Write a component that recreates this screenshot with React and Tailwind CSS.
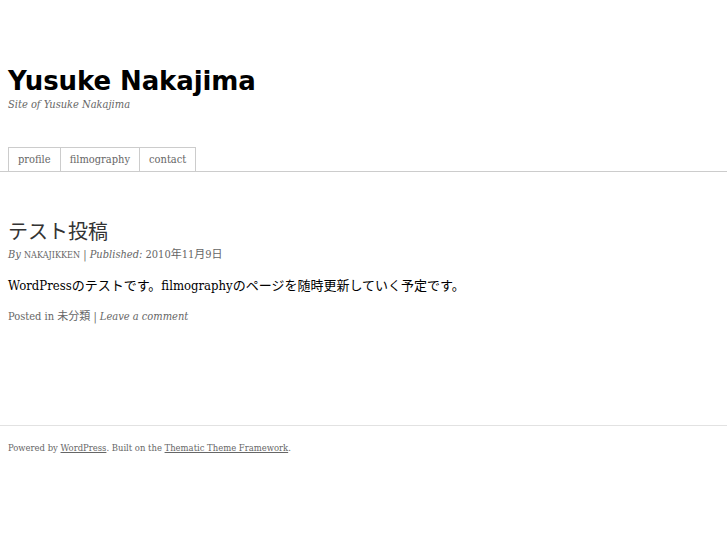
export default function App() {
  const serif = { fontFamily: '"DejaVu Serif", "Noto Sans CJK JP", serif' };

  return (
    <div className="min-h-[545px] bg-white text-[#333] font-stretch-condensed" style={serif}>
      {/* Header */}
      <div className="px-2 pt-[65px]">
        <h1
          className="text-[26px] leading-[32px] font-bold text-black font-stretch-normal tracking-[-0.1px]"
          style={{ fontFamily: '"DejaVu Sans", "Noto Sans CJK JP", sans-serif' }}
        >
          Yusuke Nakajima
        </h1>
        <div className="text-[11px] leading-[16px] italic text-[#666]">Site of Yusuke Nakajima</div>
      </div>

      {/* Menu */}
      <div className="mt-[34px] border-b border-[#ccc] px-2">
        <ul className="flex text-[11px] leading-[23px] text-[#666]">
          <li className="border-t border-l border-[#ccc] px-[9px]">profile</li>
          <li className="border-t border-l border-[#ccc] px-[9px]">filmography</li>
          <li className="border-t border-l border-r border-[#ccc] px-[9px]">contact</li>
        </ul>
      </div>

      {/* Post */}
      <div className="px-2 pt-[47px] pb-[100px]">
        <h2 className="text-[20px] leading-[26px] text-[#333]">テスト投稿</h2>
        <div className="text-[11px] leading-[16px] text-[#666] mt-[2px]">
          <span className="italic">By</span>{' '}
          <span className="text-[9px] uppercase">nakajikken</span>{' '}
          | <span className="italic">Published:</span> 2010年11月9日
        </div>
        <p className="text-[13px] leading-[20px] text-black mt-[13px]">
          WordPressのテストです。filmographyのページを随時更新していく予定です。
        </p>
        <div className="text-[11px] leading-[16px] text-[#666] mt-[13px]">
          Posted in <span>未分類</span> | <span className="italic">Leave a comment</span>
        </div>
      </div>

      {/* Footer */}
      <div className="border-t border-[#e2e2e2] px-2 pt-[15px]">
        <p className="text-[9.4px] leading-[14px] text-[#666]">
          Powered by <span className="underline">WordPress</span>. Built on the{' '}
          <span className="underline">Thematic Theme Framework</span>.
        </p>
      </div>
    </div>
  );
}
